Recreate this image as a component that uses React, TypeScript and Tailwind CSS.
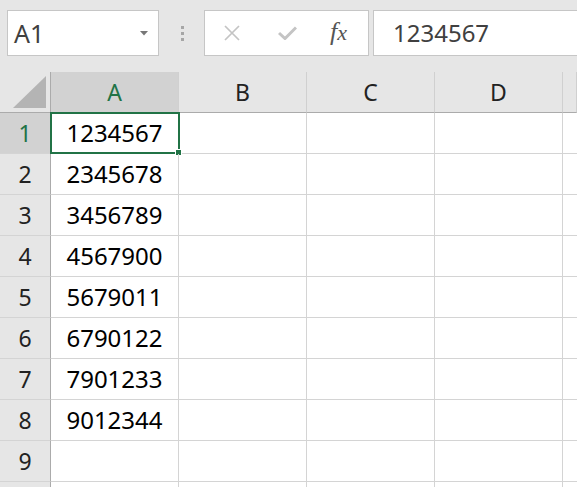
import React from 'react';

const rows = ['1234567', '2345678', '3456789', '4567900', '5679011', '6790122', '7901233', '9012344', '', ''];
const cols = ['A', 'B', 'C', 'D', 'E'];

export default function App() {
  return (
    <div className="w-[577px] h-[487px] overflow-hidden bg-[#e6e6e6] font-['Noto_Sans',sans-serif]">
      {/* formula bar */}
      <div className="h-[72px] flex items-start pt-[10px]">
        <div className="ml-[7px] w-[152px] h-[46px] bg-white border border-[#c6c6c6] flex items-center justify-between pl-[6px] pr-[10px]">
          <span className="text-[25px] text-[#404040] leading-none">A1</span>
          <svg width="8" height="5" viewBox="0 0 8 5">
            <path d="M0 0 L8 0 L4 4.5 Z" fill="#777" />
          </svg>
        </div>
        <div className="w-[45px] h-[46px] flex flex-col items-center justify-center gap-[3px] pl-[1px]">
          <div className="w-[3px] h-[3px] bg-[#a6a6a6]" />
          <div className="w-[3px] h-[3px] bg-[#a6a6a6]" />
          <div className="w-[3px] h-[3px] bg-[#a6a6a6]" />
        </div>
        <div className="w-[165px] h-[46px] bg-white border border-[#c6c6c6] flex items-center">
          <svg className="ml-[18px]" width="18" height="16" viewBox="0 0 18 16">
            <path d="M2 1 L16 15 M16 1 L2 15" stroke="#c4c4c4" strokeWidth="1.7" fill="none" />
          </svg>
          <svg className="ml-[37px]" width="19" height="14" viewBox="0 0 19 14">
            <path d="M1 7 L7 12.5 L18 1.5" stroke="#c4c4c4" strokeWidth="3" fill="none" />
          </svg>
          <span className="ml-[33px] text-[26px] italic text-[#555] font-['Liberation_Serif',serif] leading-none pb-[2px]">
            f<span className="text-[22px]">x</span>
          </span>
        </div>
        <div className="ml-[4px] flex-1 h-[46px] bg-white border border-[#c6c6c6] border-r-0 flex items-center pl-[19px]">
          <span className="text-[24px] text-[#404040] leading-none">1234567</span>
        </div>
      </div>

      {/* grid */}
      <div className="grid grid-cols-[51px_128px_128px_128px_128px_1fr] grid-rows-[41px] auto-rows-[41px] bg-white">
        <div className="bg-[#e6e6e6] border-r border-b border-[#ababab] flex items-end justify-end pr-[4px] pb-[4px]">
          <svg width="33" height="32" viewBox="0 0 33 32">
            <path d="M33 0 L33 32 L0 32 Z" fill="#b4b4b4" />
          </svg>
        </div>
        {cols.map((c, i) => (
          <div
            key={c}
            className={`border-b border-[#ababab] border-r-[#d0d0d0] border-r flex items-center justify-center text-[23px] leading-none ${
              i === 0 ? 'bg-[#d2d2d2] text-[#217346]' : 'bg-[#e6e6e6] text-[#222]'
            }`}
          >
            {i < 4 ? c : ''}
          </div>
        ))}
        {rows.map((v, r) => (
          <React.Fragment key={r}>
            <div
              className={`border-r border-[#ababab] border-b border-b-[#d4d4d4] flex items-center justify-center text-[23px] leading-none ${
                r === 0 ? 'bg-[#d2d2d2] text-[#217346]' : 'bg-[#e6e6e6] text-[#222]'
              }`}
            >
              {r < 9 ? r + 1 : ''}
            </div>
            <div className="relative border-r border-b border-[#d4d4d4] flex items-center justify-center text-[24px] text-black leading-none">
              {v}
              {r === 0 && (
                <>
                  <div className="absolute left-[-1px] top-[-1px] w-[130px] h-[42px] border-2 border-[#217346]" />
                  <div className="absolute left-[124px] top-[36px] w-[7px] h-[7px] bg-[#217346] border border-white" />
                </>
              )}
            </div>
            <div className="border-r border-b border-[#d4d4d4]" />
            <div className="border-r border-b border-[#d4d4d4]" />
            <div className="border-r border-b border-[#d4d4d4]" />
            <div className="border-b border-[#d4d4d4]" />
          </React.Fragment>
        ))}
      </div>
    </div>
  );
}
